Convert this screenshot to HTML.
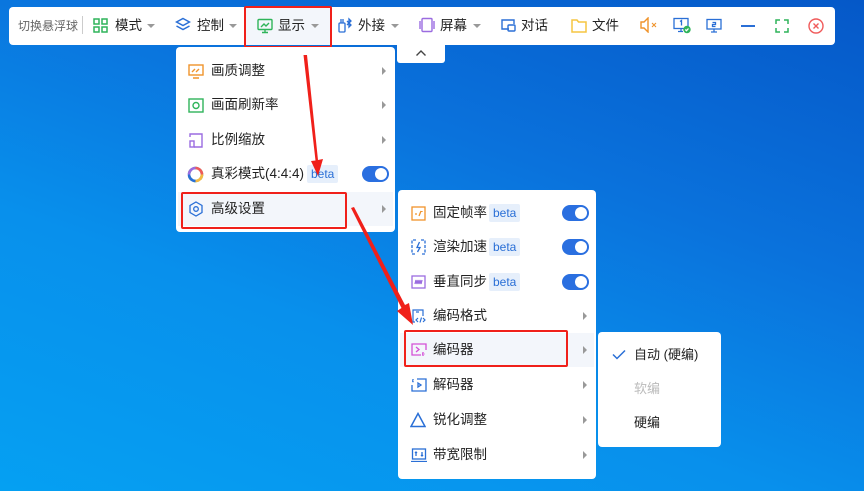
<!DOCTYPE html>
<html><head><meta charset="utf-8"><style>
*{margin:0;padding:0;box-sizing:border-box}
body{width:864px;height:491px;overflow:hidden;position:relative;font-family:"Liberation Sans","Noto Sans CJK SC",sans-serif;color:#222;
background:linear-gradient(200deg,#0558c8 0%,#0a72dc 35%,#0890ec 65%,#05a0f2 100%);}
.a{position:absolute}
.bar{left:9px;top:7px;width:826px;height:38px;background:#fff;border-radius:4px}
.t{position:absolute;font-size:13.5px;line-height:16px;white-space:nowrap}
.caret{position:absolute;width:0;height:0;border-left:4px solid transparent;border-right:4px solid transparent;border-top:4px solid #999}
.menu{background:#fff;border-radius:4px;position:absolute}
.row{position:absolute;left:0;right:0;height:34px}
.row .lbl{position:absolute;top:9px;font-size:13.5px;line-height:16px;white-space:nowrap;color:#222}
.arr{position:absolute;top:13px;width:0;height:0;border-top:4px solid transparent;border-bottom:4px solid transparent;border-left:4px solid #999}
.beta{position:absolute;top:8px;height:18px;line-height:18px;padding:0 4px;background:#e6effb;color:#2a6fd6;font-size:12px;border-radius:2px}
.tog{position:absolute;top:9px;width:27px;height:16px;border-radius:8px;background:#2a6fe0}
.tog:after{content:"";position:absolute;right:2px;top:2px;width:12px;height:12px;border-radius:50%;background:#fff}
.red{position:absolute;border:2px solid #f0201a;border-radius:2px}
svg.i{position:absolute}
</style></head><body>
<div class="a bar"></div>
<div class="t" style="left:18px;top:18px;font-size:12px;color:#666">切换悬浮球</div>
<div class="a" style="left:82px;top:16px;width:1px;height:18px;background:#ccc"></div>
<svg class="i" style="left:93px;top:18px" width="15" height="15" viewBox="0 0 15 15" fill="none" stroke="#2fb45a" stroke-width="1.5"><rect x="1" y="1" width="5" height="5"/><rect x="9" y="1" width="5" height="5"/><rect x="1" y="9" width="5" height="5"/><rect x="9" y="9" width="5" height="5"/></svg>
<div class="t" style="left:115px;top:18px">模式</div><div class="caret" style="left:147px;top:24px"></div>
<svg class="i" style="left:175px;top:17px" width="16" height="16" viewBox="0 0 16 16" fill="none" stroke="#2a6fd6" stroke-width="1.5"><path d="M8 1.5L14.5 5 8 8.5 1.5 5z"/><path d="M1.5 9L8 12.5 14.5 9"/></svg>
<div class="t" style="left:197px;top:18px">控制</div><div class="caret" style="left:229px;top:24px"></div>
<div class="a" style="left:246px;top:8px;width:84px;height:37px;background:#f3f6fb"></div>
<svg class="i" style="left:257px;top:18px" width="16" height="16" viewBox="0 0 16 16" fill="none" stroke="#2fb45a" stroke-width="1.4"><rect x="1" y="1.5" width="14" height="10" rx="1"/><path d="M5 14.5h6M8 11.5v3M4 9l3-3 2 2 3-3"/></svg>
<div class="t" style="left:278px;top:18px">显示</div><div class="caret" style="left:311px;top:24px"></div>
<div class="red" style="left:244px;top:6px;width:88px;height:42px"></div>
<svg class="i" style="left:338px;top:17px" width="16" height="16" viewBox="0 0 16 16" fill="none" stroke="#2a6fd6" stroke-width="1.3"><rect x="1" y="6" width="6" height="9" rx="1"/><path d="M3 6V2M5 6V2M9 4l4 4-2 2V2l2 2-4 4"/></svg>
<div class="t" style="left:358px;top:18px">外接</div><div class="caret" style="left:391px;top:24px"></div>
<svg class="i" style="left:419px;top:17px" width="16" height="16" viewBox="0 0 16 16" fill="none" stroke="#9b6ce0" stroke-width="1.4"><rect x="3" y="1.5" width="10" height="13" rx="1"/><path d="M1 4v8M15 4v8"/></svg>
<div class="t" style="left:440px;top:18px">屏幕</div><div class="caret" style="left:473px;top:24px"></div>
<svg class="i" style="left:500px;top:18px" width="16" height="15" viewBox="0 0 16 15" fill="none" stroke="#2a6fd6" stroke-width="1.4"><path d="M9 11H2V2h12v4"/><rect x="8" y="7" width="7" height="6" rx="1"/></svg>
<div class="t" style="left:521px;top:18px">对话</div>
<svg class="i" style="left:571px;top:18px" width="16" height="15" viewBox="0 0 16 15" fill="none" stroke="#f5c542" stroke-width="1.5"><path d="M1 2h5l1.5 2H15v10H1z"/></svg>
<div class="t" style="left:592px;top:18px">文件</div>
<svg class="i" style="left:640px;top:17px" width="18" height="16" viewBox="0 0 18 16" fill="none" stroke="#f0932b" stroke-width="1.4"><path d="M1 5h3l4-4v14l-4-4H1z"/><path d="M12 6l4 4M16 6l-4 4" stroke-width="1.1"/></svg>
<svg class="i" style="left:673px;top:17px" width="19" height="17" viewBox="0 0 19 17" fill="none" stroke="#2a6fd6" stroke-width="1.3"><rect x="1" y="1.5" width="14" height="10"/><path d="M5 14.5h5M8 11.5v3M7 4.5l1.5-1v5"/><circle cx="14" cy="12.5" r="3.7" fill="#2fb45a" stroke="none"/><path d="M12.3 12.5l1.2 1.2 2-2.2" stroke="#fff"/></svg>
<svg class="i" style="left:706px;top:18px" width="16" height="15" viewBox="0 0 16 15" fill="none" stroke="#2a6fd6" stroke-width="1.3"><rect x="1" y="1.5" width="14" height="9.5"/><path d="M5 14h6M8 11v3M6.5 4.5h3v2h-3v2h3"/></svg>
<div class="a" style="left:741px;top:25px;width:14px;height:2px;background:#2a6fd6"></div>
<svg class="i" style="left:775px;top:19px" width="14" height="14" viewBox="0 0 14 14" fill="none" stroke="#2fb45a" stroke-width="1.5"><path d="M1 5V1h4M9 1h4v4M13 9v4H9M5 13H1V9"/></svg>
<svg class="i" style="left:808px;top:18px" width="16" height="16" viewBox="0 0 16 16" fill="none" stroke="#f05a5a" stroke-width="1.4"><circle cx="8" cy="8" r="7"/><path d="M5.5 5.5l5 5M10.5 5.5l-5 5"/></svg>
<div class="a" style="left:397px;top:45px;width:48px;height:18px;background:#fff;border-radius:0 0 3px 3px"></div>
<svg class="i" style="left:415px;top:49px" width="12" height="8" viewBox="0 0 12 8" fill="none" stroke="#444" stroke-width="1.4"><path d="M1.5 6.5L6 2l4.5 4.5"/></svg>

<!-- menu 1 -->
<div class="menu" style="left:176px;top:47px;width:219px;height:185px">
 <div class="row" style="top:7px"><svg class="i" style="left:12px;top:10px" width="16" height="15" viewBox="0 0 16 15" fill="none" stroke="#f0932b" stroke-width="1.4"><rect x="1" y="1" width="14" height="10"/><path d="M5 14h6M4 8l3-3M8 8l3-3"/></svg><div class="lbl" style="left:35px">画质调整</div><div class="arr" style="left:206px"></div></div>
 <div class="row" style="top:41px"><svg class="i" style="left:12px;top:10px" width="16" height="15" viewBox="0 0 16 15" fill="none" stroke="#2fb45a" stroke-width="1.4"><rect x="1" y="1" width="14" height="13"/><circle cx="8" cy="7.5" r="3"/></svg><div class="lbl" style="left:35px">画面刷新率</div><div class="arr" style="left:206px"></div></div>
 <div class="row" style="top:76px"><svg class="i" style="left:12px;top:10px" width="16" height="15" viewBox="0 0 16 15" fill="none" stroke="#9b6ce0" stroke-width="1.4"><path d="M2 4V1h12v13H6"/><rect x="2" y="8" width="4" height="6"/></svg><div class="lbl" style="left:35px">比例缩放</div><div class="arr" style="left:206px"></div></div>
 <div class="row" style="top:110px"><svg class="i" style="left:11px;top:9px" width="17" height="17" viewBox="0 0 17 17" fill="none" stroke-width="2.6"><circle cx="8.5" cy="8.5" r="6.5" stroke="#2fb45a" stroke-dasharray="5 2"/><path d="M8.5 2a6.5 6.5 0 0 1 6.5 6.5" stroke="#f05a5a"/><path d="M2 8.5a6.5 6.5 0 0 1 6.5-6.5" stroke="#9b6ce0"/><path d="M15 8.5a6.5 6.5 0 0 1-6.5 6.5" stroke="#f5b942"/><path d="M8.5 15A6.5 6.5 0 0 1 2 8.5" stroke="#2a6fd6"/></svg><div class="lbl" style="left:35px">真彩模式(4:4:4)</div><div class="beta" style="left:131px">beta</div><div class="tog" style="left:186px"></div></div>
 <div class="row" style="top:145px;left:2px;right:2px;background:#f3f6fb"><svg class="i" style="left:10px;top:9px" width="16" height="16" viewBox="0 0 16 16" fill="none" stroke="#2a6fd6" stroke-width="1.3"><path d="M8 1l6 3.5v7L8 15l-6-3.5v-7z"/><circle cx="8" cy="8" r="2.3"/></svg><div class="lbl" style="left:33px">高级设置</div><div class="arr" style="left:204px"></div></div>
</div>
<div class="red" style="left:181px;top:192px;width:166px;height:37px"></div>

<!-- menu 2 -->
<div class="menu" style="left:398px;top:190px;width:198px;height:289px">
 <div class="row" style="top:6px"><svg class="i" style="left:13px;top:10px" width="15" height="15" viewBox="0 0 15 15" fill="none" stroke="#f0932b" stroke-width="1.3"><rect x="1" y="1" width="13" height="13"/><path d="M4 8h2M8 10l2-5M11 5v1"/></svg><div class="lbl" style="left:35px">固定帧率</div><div class="beta" style="left:91px">beta</div><div class="tog" style="left:164px"></div></div>
 <div class="row" style="top:40px"><svg class="i" style="left:13px;top:9px" width="15" height="16" viewBox="0 0 15 16" fill="none" stroke="#2a6fd6" stroke-width="1.3"><path d="M5 1H1v14h4M10 1h4v14h-4" stroke-dasharray="3 1.5"/><path d="M8.5 3L6 8.5h3L6.5 13"/></svg><div class="lbl" style="left:35px">渲染加速</div><div class="beta" style="left:91px">beta</div><div class="tog" style="left:164px"></div></div>
 <div class="row" style="top:75px"><svg class="i" style="left:13px;top:10px" width="15" height="14" viewBox="0 0 15 14" fill="none" stroke="#9b6ce0" stroke-width="1.3"><rect x="1" y="1" width="13" height="12"/><path d="M4 9l1-4 1 4 1-4 1 4 1-4 1 4 1-4"/></svg><div class="lbl" style="left:35px">垂直同步</div><div class="beta" style="left:91px">beta</div><div class="tog" style="left:164px"></div></div>
 <div class="row" style="top:109px"><svg class="i" style="left:13px;top:9px" width="15" height="16" viewBox="0 0 15 16" fill="none" stroke="#2a6fd6" stroke-width="1.2"><path d="M4 14H2V2h10v6M5 4h3"/><path d="M7 10l-2 2 2 2M12 10l2 2-2 2M10.5 9.5l-1.5 5"/></svg><div class="lbl" style="left:35px">编码格式</div><div class="arr" style="left:185px"></div></div>
 <div class="row" style="top:143px;left:2px;right:2px;background:#f3f6fb"><svg class="i" style="left:11px;top:10px" width="16" height="14" viewBox="0 0 16 14" fill="none" stroke="#d44fd6" stroke-width="1.3"><path d="M10 12H1V1h14v6"/><path d="M5 4l3 2.5L5 9"/><path d="M12 9v4M11 11h3" stroke-dasharray="1.5 1"/></svg><div class="lbl" style="left:33px">编码器</div><div class="arr" style="left:183px"></div></div>
 <div class="row" style="top:178px"><svg class="i" style="left:13px;top:10px" width="16" height="14" viewBox="0 0 16 14" fill="none" stroke="#2a6fd6" stroke-width="1.3"><path d="M6 1h9v12H1V7"/><path d="M7 5l3 2-3 2z"/><path d="M2 1v4M1 3h2" stroke-dasharray="1.2 0.8"/></svg><div class="lbl" style="left:35px">解码器</div><div class="arr" style="left:185px"></div></div>
 <div class="row" style="top:213px"><svg class="i" style="left:12px;top:9px" width="16" height="16" viewBox="0 0 16 16" fill="none" stroke="#2a6fd6" stroke-width="1.5"><path d="M8 1.5L15 14.5H1z"/></svg><div class="lbl" style="left:35px">锐化调整</div><div class="arr" style="left:185px"></div></div>
 <div class="row" style="top:248px"><svg class="i" style="left:13px;top:10px" width="16" height="14" viewBox="0 0 16 14" fill="none" stroke="#2a6fd6" stroke-width="1.3"><rect x="1.5" y="1" width="13" height="10"/><path d="M0 13.5h16M5 8V4M4 5l1-1 1 1M11 4v4M10 7l1 1 1-1"/></svg><div class="lbl" style="left:35px">带宽限制</div><div class="arr" style="left:185px"></div></div>
</div>
<div class="red" style="left:404px;top:330px;width:164px;height:37px"></div>

<!-- menu 3 -->
<div class="menu" style="left:598px;top:332px;width:123px;height:115px">
 <svg class="i" style="left:14px;top:17px" width="14" height="11" viewBox="0 0 14 11" fill="none" stroke="#2a6fd6" stroke-width="1.5"><path d="M1 5.5L5 9.5 13 1.5"/></svg>
 <div class="t" style="left:36px;top:15px;font-size:13px">自动 (硬编)</div>
 <div class="t" style="left:36px;top:49px;font-size:13px;color:#bbb">软编</div>
 <div class="t" style="left:36px;top:83px;font-size:13px">硬编</div>
</div>

<svg class="a" style="left:0;top:0" width="864" height="491" viewBox="0 0 864 491">
 <path d="M303.5 55 L307 55 L318 160 L323 159 L318 176 L311 161 L315.5 160.5 Z" fill="#f0201a"/>
 <path d="M351 208 L354 207 L405 305 L409 303 L413 325 L397 311 L401.5 308 Z" fill="#f0201a"/>
</svg>
</body></html>
